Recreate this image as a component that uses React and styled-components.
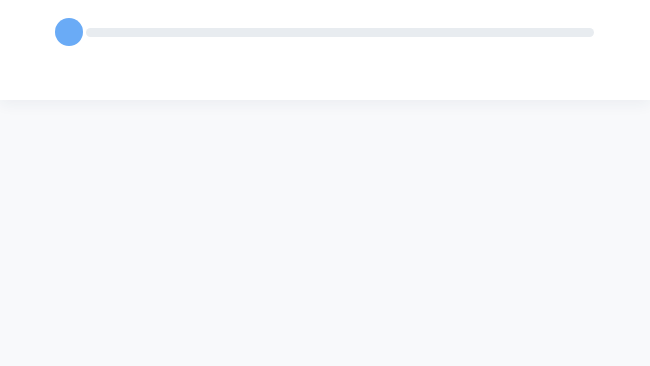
import React from "react";
import styled, { createGlobalStyle } from "styled-components";

const Global = createGlobalStyle`
  html, body {
    margin: 0;
    padding: 0;
    background: #f8f9fb;
    font-family: "Inter", "Liberation Sans", sans-serif;
  }
`;

const Header = styled.header`
  position: relative;
  height: 100px;
  background: #ffffff;
  box-shadow: 0 4px 14px rgba(30, 50, 80, 0.06);
  padding: 18px 56px 0 55px;
  box-sizing: border-box;
`;

const Track = styled.div`
  display: flex;
  align-items: center;
  gap: 3px;
`;

const Dot = styled.div`
  width: 28px;
  height: 28px;
  border-radius: 50%;
  background: #6aabf6;
  flex-shrink: 0;
`;

const Bar = styled.div`
  flex: 1;
  height: 9px;
  border-radius: 5px;
  background: #e8ecf0;
  overflow: hidden;
`;

const Fill = styled.div`
  height: 100%;
  background: #6aabf6;
`;

const Main = styled.main`
  min-height: 266px;
  background: #f8f9fb;
`;

export default function App() {
  const progress = 0;
  return (
    <>
      <Global />
      <Header>
        <Track>
          <Dot />
          <Bar>
            <Fill style={{ width: `${progress}%` }} />
          </Bar>
        </Track>
      </Header>
      <Main />
    </>
  );
}
